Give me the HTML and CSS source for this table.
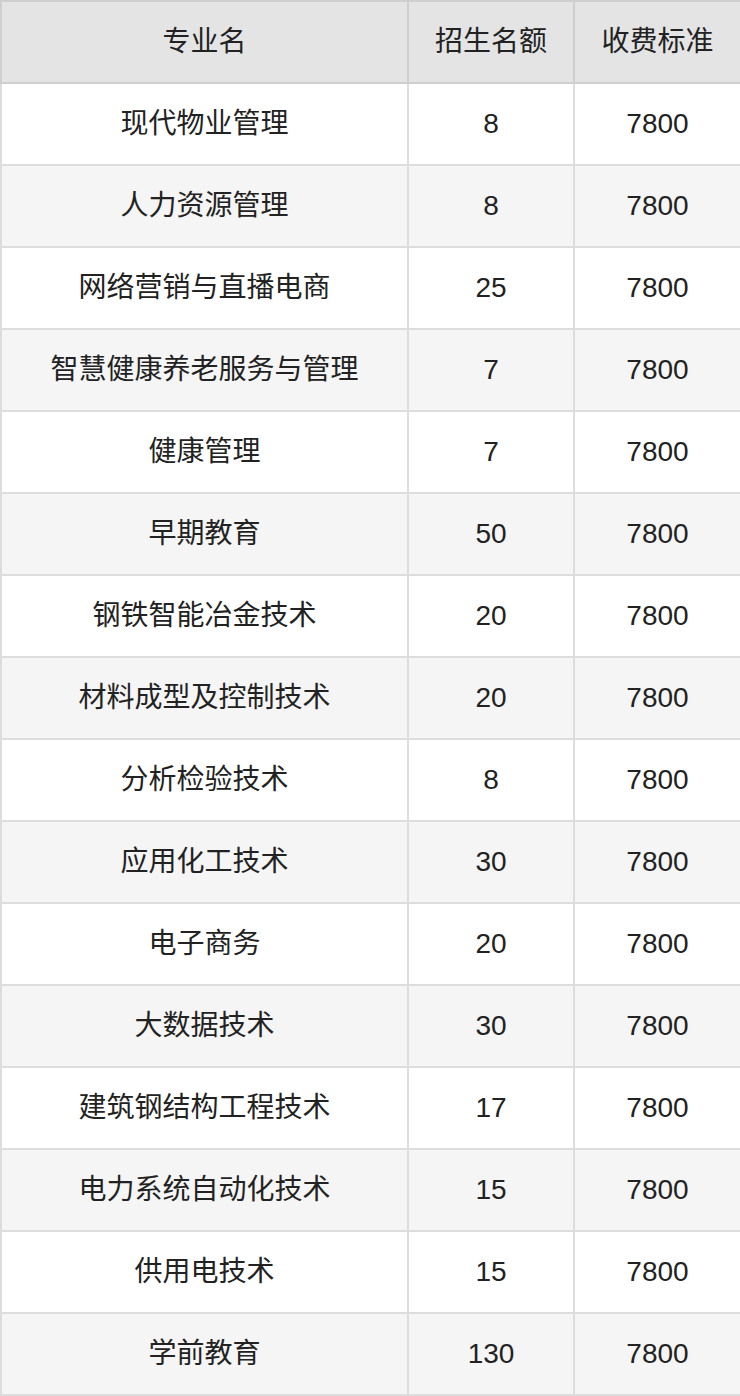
FILE: index.html
```html
<!DOCTYPE html>
<html lang="zh">
<head>
<meta charset="utf-8">
<link rel="stylesheet" href="styles.css">
</head>
<body>
<table class="tbl">
  <colgroup><col class="c1"><col class="c2"><col class="c3"></colgroup>
  <thead>
    <tr><th>专业名</th><th>招生名额</th><th>收费标准</th></tr>
  </thead>
  <tbody>
    <tr><td>现代物业管理</td><td class="num">8</td><td class="num">7800</td></tr>
    <tr><td>人力资源管理</td><td class="num">8</td><td class="num">7800</td></tr>
    <tr><td>网络营销与直播电商</td><td class="num">25</td><td class="num">7800</td></tr>
    <tr><td>智慧健康养老服务与管理</td><td class="num">7</td><td class="num">7800</td></tr>
    <tr><td>健康管理</td><td class="num">7</td><td class="num">7800</td></tr>
    <tr><td>早期教育</td><td class="num">50</td><td class="num">7800</td></tr>
    <tr><td>钢铁智能冶金技术</td><td class="num">20</td><td class="num">7800</td></tr>
    <tr><td>材料成型及控制技术</td><td class="num">20</td><td class="num">7800</td></tr>
    <tr><td>分析检验技术</td><td class="num">8</td><td class="num">7800</td></tr>
    <tr><td>应用化工技术</td><td class="num">30</td><td class="num">7800</td></tr>
    <tr><td>电子商务</td><td class="num">20</td><td class="num">7800</td></tr>
    <tr><td>大数据技术</td><td class="num">30</td><td class="num">7800</td></tr>
    <tr><td>建筑钢结构工程技术</td><td class="num">17</td><td class="num">7800</td></tr>
    <tr><td>电力系统自动化技术</td><td class="num">15</td><td class="num">7800</td></tr>
    <tr><td>供用电技术</td><td class="num">15</td><td class="num">7800</td></tr>
    <tr><td>学前教育</td><td class="num">130</td><td class="num">7800</td></tr>
  </tbody>
</table>
</body>
</html>
```
FILE: styles.css
```css
html, body {
  margin: 0;
  padding: 0;
  background: #ffffff;
}
.tbl {
  width: 740px;
  border-collapse: collapse;
  table-layout: fixed;
  font-family: "Liberation Sans", "Noto Sans CJK SC", sans-serif;
  font-size: 28px;
  line-height: 32px;
  color: #222222;
}
.c1 { width: 407px; }
.c2 { width: 166px; }
.c3 { width: 167px; }
.tbl th, .tbl td {
  border: 2px solid #dddddd;
  height: 80px;
  padding: 0;
  text-align: center;
  vertical-align: middle;
  box-sizing: content-box;
}
.tbl th {
  background: #e4e4e4;
  font-weight: normal;
  border-color: #cfcfcf;
}
.tbl tbody tr:nth-child(even) td {
  background: #f5f5f5;
}
```
